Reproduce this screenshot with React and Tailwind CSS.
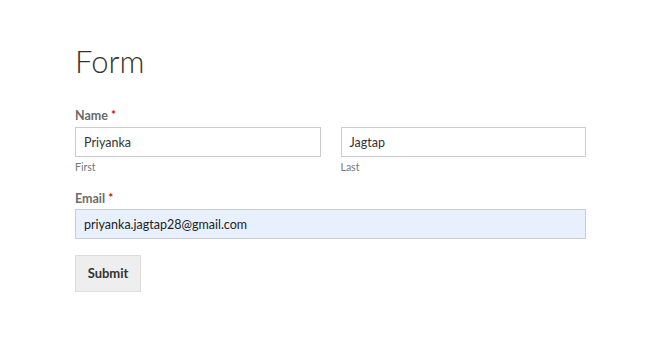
export default function App() {
  return (
    <div className="min-h-[351px] w-[667px] bg-white pl-[75px] pt-[43px]" style={{ fontFamily: "Lato, 'Open Sans', sans-serif" }}>
      <h1 className="text-[31px] font-light leading-[1.2] text-[#333]">Form</h1>
      <div className="mt-[29px] text-[12.5px] font-bold leading-[14px] text-[#6b6b6b]">
        Name <span className="relative top-[-1px] text-[12px] leading-none text-[#d00]">*</span>
      </div>
      <div className="mt-[4px] flex w-[511px] gap-[20px]">
        <div className="flex-1">
          <div className="flex h-[30px] items-center border border-[#ccc] bg-white pl-[8px] pt-[2px] text-[12.5px] text-[#333]">Priyanka</div>
          <div className="mt-[3px] text-[10.5px] leading-[14px] text-[#777]">First</div>
        </div>
        <div className="flex-1">
          <div className="flex h-[30px] items-center border border-[#ccc] bg-white pl-[8px] pt-[2px] text-[12.5px] text-[#333]">Jagtap</div>
          <div className="mt-[3px] text-[10.5px] leading-[14px] text-[#777]">Last</div>
        </div>
      </div>
      <div className="mt-[18px] text-[12.5px] font-bold leading-[14px] text-[#6b6b6b]">
        Email <span className="relative top-[-1px] text-[12px] leading-none text-[#d00]">*</span>
      </div>
      <div className="mt-[3px] flex h-[30px] w-[511px] items-center border border-[#ccc] bg-[#e8f0fe] pl-[8px] pt-[2px] text-[12.5px] text-[#222]">
        priyanka.jagtap28@gmail.com
      </div>
      <div className="mt-[16px] flex h-[37px] w-[66px] items-center justify-center border border-[#ddd] bg-[#eee] text-[13px] font-bold text-[#333]">
        Submit
      </div>
    </div>
  );
}
